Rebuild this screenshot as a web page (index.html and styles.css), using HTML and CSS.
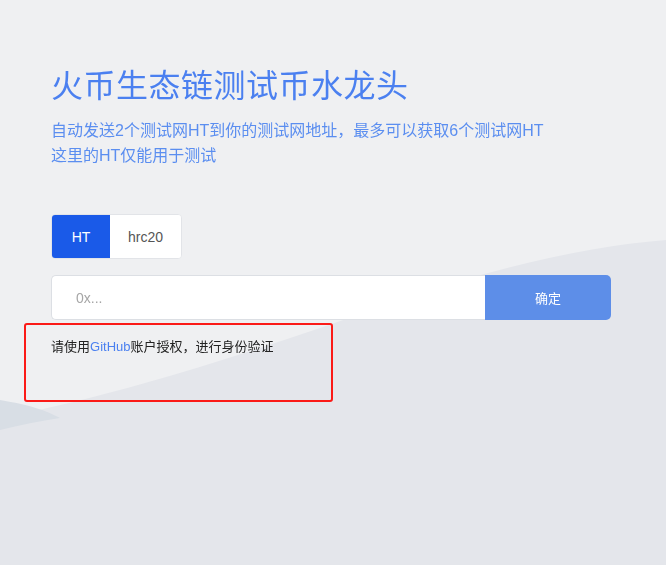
FILE: index.html
```html
<!DOCTYPE html>
<html lang="zh-CN">
<head>
    <meta charset="UTF-8" />
    <meta name="viewport" content="width=device-width, initial-scale=1" />
    <title>火币生态链测试币水龙头</title>
    <link rel="stylesheet" href="styles.css">
</head>
<body>
    <svg class="bg" viewBox="0 0 666 565" preserveAspectRatio="none">
        <path d="M0 418 C 120 395, 260 350, 400 300 C 500 266, 590 246, 666 240 L666 565 L0 565 Z" fill="#e4e6eb" />
        <path d="M0 400 C 30 405, 45 410, 60 418 C 40 421, 20 425, 0 430 Z" fill="#d8dee5" />
    </svg>
    <main class="faucet">
        <h1 class="title">火币生态链测试币水龙头</h1>
        <p class="desc">自动发送2个测试网HT到你的测试网地址，最多可以获取6个测试网HT<br>这里的HT仅能用于测试</p>

        <div class="tabs">
            <button class="tab active">HT</button>
            <button class="tab">hrc20</button>
        </div>

        <form class="address" onsubmit="return false">
            <input type="text" class="address-input" placeholder="0x..." />
            <button class="submit">确定</button>
        </form>

        <div class="notice">
            请使用<a href="#">GitHub</a>账户授权，进行身份验证
        </div>
    </main>
</body>
</html>
```

FILE: styles.css
```css
body {
    margin: 0;
    background: #eff0f2;
    font-family: "Liberation Sans", Arial, "Noto Sans CJK SC", sans-serif;
    height: 565px;
    overflow: hidden;
}
.bg {
    position: fixed;
    left: 0;
    top: 0;
    width: 100%;
    height: 100%;
    z-index: -1;
}
.faucet {
    padding: 64px 0 0 51px;
    width: 560px;
}
.title {
    margin: 0;
    font-size: 32px;
    font-weight: normal;
    line-height: 44px;
    color: #4b80f0;
    letter-spacing: 0.5px;
}
.desc {
    margin: 10px 0 0;
    font-size: 16px;
    line-height: 25px;
    color: #5b8ef0;
    white-space: nowrap;
}
.tabs {
    display: inline-flex;
    margin-top: 46px;
    background: #fff;
    border: 1px solid #e2e4e8;
    border-radius: 4px;
    overflow: hidden;
}
.tab {
    height: 43px;
    border: none;
    background: #fff;
    font-family: inherit;
    font-size: 14px;
    color: #555;
    padding: 0;
    width: 71px;
    cursor: pointer;
}
.tab.active {
    width: 58px;
    background: #1a5ae8;
    color: #fff;
}
.address {
    display: flex;
    margin-top: 16px;
    height: 45px;
}
.address-input {
    flex: 1;
    border: 1px solid #dcdfe4;
    border-right: none;
    border-radius: 5px 0 0 5px;
    padding: 0 24px;
    font-family: inherit;
    font-size: 14px;
    background: #fff;
    outline: none;
}
.address-input::placeholder {
    color: #a6a6a6;
}
.submit {
    width: 126px;
    border: none;
    border-radius: 0 5px 5px 0;
    background: #5d8ee8;
    color: #fff;
    font-family: inherit;
    font-size: 13px;
    cursor: pointer;
}
.notice {
    margin: 3px 0 0 -27px;
    width: 309px;
    height: 79px;
    box-sizing: border-box;
    border: 2px solid #fb1a17;
    border-radius: 3px;
    padding: 11px 0 0 25px;
    font-size: 13px;
    color: #222;
}
.notice a {
    color: #4b80f0;
    text-decoration: none;
}
```
